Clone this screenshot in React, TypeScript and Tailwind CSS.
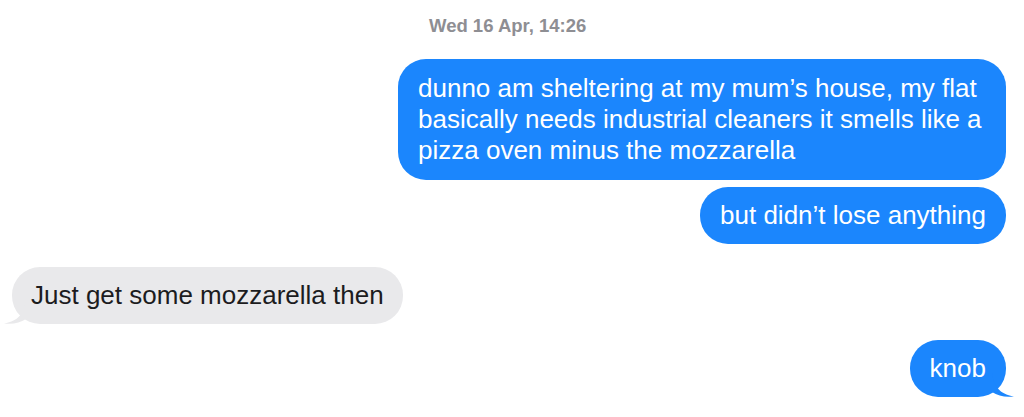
import React from 'react';

const font = { fontFamily: '"Liberation Sans", Arial, sans-serif' };

const Tail = ({ side, color }: { side: 'left' | 'right'; color: string }) =>
  side === 'right' ? (
    <svg
      className="absolute -right-[8px] bottom-0"
      width="22"
      height="24"
      viewBox="0 0 22 24"
    >
      <path d="M0 0 C2 13 7 21 22 23.5 C13 24.5 6 23 0 19 Z" fill={color} />
    </svg>
  ) : (
    <svg
      className="absolute -left-[8px] bottom-0"
      width="22"
      height="24"
      viewBox="0 0 22 24"
    >
      <path d="M22 0 C20 13 15 21 0 23.5 C9 24.5 16 23 22 19 Z" fill={color} />
    </svg>
  );

const Sent = ({ text, tail, multi }: { text: string; tail?: boolean; multi?: boolean }) => (
  <div className="flex justify-end pr-[18px]">
    <div
      className={`relative max-w-[608px] rounded-[28px] bg-[#1b86fd] px-[20px] text-[26px] leading-[31px] text-white ${
        multi ? 'py-[14px]' : 'py-[13px]'
      }`}
    >
      {text}
      {tail && <Tail side="right" color="#1b86fd" />}
    </div>
  </div>
);

export default function App() {
  return (
    <div className="h-[417px] w-[1024px] overflow-hidden bg-white" style={font}>
      {/* timestamp */}
      <div className="pt-[15px] pl-[429px] text-[18.5px] leading-[22px] font-semibold text-[#8e8e93]">
        Wed 16 Apr, 14:26
      </div>

      <div className="mt-[22px] flex flex-col">
        <Sent
          multi
          text="dunno am sheltering at my mum’s house, my flat basically needs industrial cleaners it smells like a pizza oven minus the mozzarella"
        />
        <div className="mt-[7px]">
          <Sent text="but didn’t lose anything" />
        </div>

        {/* received */}
        <div className="mt-[23px] flex pl-[12px]">
          <div className="relative rounded-[28px] bg-[#e9e9eb] px-[19px] py-[13px] text-[26px] leading-[31px] text-[#1c1c1e]">
            Just get some mozzarella then
            <Tail side="left" color="#e9e9eb" />
          </div>
        </div>

        <div className="mt-[16px]">
          <Sent text="knob" tail />
        </div>
      </div>
    </div>
  );
}
